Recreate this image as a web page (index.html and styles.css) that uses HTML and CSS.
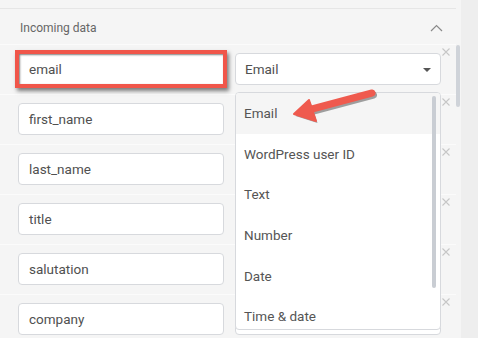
FILE: index.html
```html
<!DOCTYPE html>
<html lang="en">
<head>
    <meta charset="UTF-8" />
    <title>Incoming data</title>
    <link rel="stylesheet" href="styles.css">
</head>
<body>
<div class="panel">
    <div class="list">
        <div class="top-gap"></div>
        <div class="head">
            <span class="head-title">Incoming data</span>
            <svg class="chevron" width="13" height="8" viewBox="0 0 13 8"><path d="M1 7 L6.5 1.5 L12 7" fill="none" stroke="#8a8a8a" stroke-width="1.2"/></svg>
        </div>

        <div class="row">
            <div class="field highlight">email</div>
            <div class="select">Email<span class="caret"></span></div>
            <svg class="remove" width="8" height="8" viewBox="0 0 8 8"><path d="M0.5 0.5 L7.5 7.5 M7.5 0.5 L0.5 7.5" stroke="#c6c6c6" stroke-width="1.1"/></svg>
        </div>
        <!-- selects below are covered by the open menu -->
        <div class="row">
            <div class="field">first_name</div>
            <div class="select"><span class="caret"></span></div>
            <svg class="remove" width="8" height="8" viewBox="0 0 8 8"><path d="M0.5 0.5 L7.5 7.5 M7.5 0.5 L0.5 7.5" stroke="#c6c6c6" stroke-width="1.1"/></svg>
        </div>
        <div class="row">
            <div class="field">last_name</div>
            <div class="select"><span class="caret"></span></div>
            <svg class="remove" width="8" height="8" viewBox="0 0 8 8"><path d="M0.5 0.5 L7.5 7.5 M7.5 0.5 L0.5 7.5" stroke="#c6c6c6" stroke-width="1.1"/></svg>
        </div>
        <div class="row">
            <div class="field">title</div>
            <div class="select"><span class="caret"></span></div>
            <svg class="remove" width="8" height="8" viewBox="0 0 8 8"><path d="M0.5 0.5 L7.5 7.5 M7.5 0.5 L0.5 7.5" stroke="#c6c6c6" stroke-width="1.1"/></svg>
        </div>
        <div class="row">
            <div class="field">salutation</div>
            <div class="select"><span class="caret"></span></div>
            <svg class="remove" width="8" height="8" viewBox="0 0 8 8"><path d="M0.5 0.5 L7.5 7.5 M7.5 0.5 L0.5 7.5" stroke="#c6c6c6" stroke-width="1.1"/></svg>
        </div>
        <div class="row">
            <div class="field">company</div>
            <div class="select"><span class="caret"></span></div>
            <svg class="remove" width="8" height="8" viewBox="0 0 8 8"><path d="M0.5 0.5 L7.5 7.5 M7.5 0.5 L0.5 7.5" stroke="#c6c6c6" stroke-width="1.1"/></svg>
        </div>

        <!-- open menu of the first select -->
        <div class="menu">
            <div class="menu-item active">Email</div>
            <div class="menu-item">WordPress user ID</div>
            <div class="menu-item">Text</div>
            <div class="menu-item">Number</div>
            <div class="menu-item">Date</div>
            <div class="menu-item">Time &amp; date</div>
            <div class="menu-thumb"></div>
        </div>

        <!-- annotation arrow -->
        <svg class="arrow" width="478" height="338" viewBox="0 0 478 338">
            <g transform="translate(1.5,2)" fill="#000" opacity="0.35">
                <line x1="312" y1="109" x2="372" y2="93" stroke="#000" stroke-width="7" stroke-linecap="round"/>
                <polygon points="294,114 309,100 316,121"/>
            </g>
            <line x1="312" y1="109" x2="372" y2="93" stroke="#ef5a4e" stroke-width="7" stroke-linecap="round"/>
            <polygon points="294,114 309,100 316,121" fill="#ef5a4e" stroke="#ef5a4e" stroke-width="2" stroke-linejoin="round"/>
        </svg>
    </div>
    <div class="scroll"><div class="scroll-thumb"></div></div>
</div>
</body>
</html>
```

FILE: styles.css
```css
html, body { margin: 0; padding: 0; }
body {
    width: 478px; height: 338px; overflow: hidden;
    background: #eeeeee;
    font-family: Roboto, 'Liberation Sans', sans-serif;
    color: #4a4a4a;
}
.panel { width: 461px; height: 338px; display: flex; background: #f5f5f5; overflow: hidden; }
.list { position: relative; width: 456px; }
.top-gap { height: 8px; border-bottom: 1px solid #e6e6e6; }
.head {
    height: 36px; box-sizing: border-box; display: flex; align-items: center; justify-content: space-between;
    padding: 3px 13px 0 20px; border-bottom: 1px solid #fbfbfb;
}
.head-title { font-size: 12px; color: #666; }
.chevron { margin-top: -1px; }
.row {
    height: 41px; padding-top: 8px; padding-left: 18px;
    display: flex; align-items: flex-start;
    border-bottom: 1px solid #fbfbfb;
}
.field, .select {
    box-sizing: border-box; height: 32px; width: 206px;
    background: #fff; border: 1px solid #d7d9dd; border-radius: 4px;
    padding-left: 10px; display: flex; align-items: center;
    font-size: 13.5px; color: #505050;
}
.field.highlight {
    border-radius: 0; border-color: #f0564a;
    box-shadow: inset 1px 1px 2px rgba(0,0,0,.5), 0 0 0 3px #f0564a, 2px 3px 4px 3px rgba(0,0,0,.5);
}
.select { margin-left: 11px; position: relative; padding-left: 9px; }
.caret {
    position: absolute; right: 9px; top: 14px;
    border-left: 4px solid transparent; border-right: 4px solid transparent; border-top: 4px solid #555;
}
.remove { margin-left: 1px; margin-top: -5px; }
.menu {
    position: absolute; left: 235px; top: 92px; width: 206px; height: 238px; box-sizing: border-box;
    background: #fff; border: 1px solid #d7d9dd; border-radius: 4px; overflow: hidden;
}
.menu-item { height: 40.6px; padding-left: 8px; display: flex; align-items: center; font-size: 13.5px; color: #555; }
.menu-item.active { background: #f5f5f5; }
.menu-thumb { position: absolute; left: 196px; top: 3px; width: 4px; height: 192px; border-radius: 2px; background: #c9cdd3; }
.arrow { position: absolute; left: 0; top: 0; pointer-events: none; }
.scroll { width: 5px; }
.scroll-thumb { margin-top: 45px; width: 4px; height: 62px; border-radius: 2px; background: #cfd3d9; }
```
